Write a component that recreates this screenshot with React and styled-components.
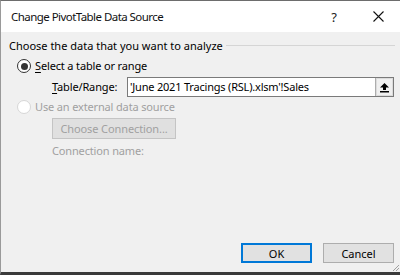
import React from "react";
import styled, { createGlobalStyle } from "styled-components";

const Global = createGlobalStyle`
  html, body { margin: 0; padding: 0; background: #f0f0f0; }
  body { font-family: "Noto Sans", "Open Sans", sans-serif; }
`;

export default function App() {
  return (
    <>
      <Global />
      <Dialog>
        <TitleBar>
          <Title>Change PivotTable Data Source</Title>
          <TitleButton>?</TitleButton>
          <TitleButton>
            <svg width="11" height="11" viewBox="0 0 11 11">
              <path d="M0.5 0.5 L10.5 10.5 M10.5 0.5 L0.5 10.5" stroke="#111" strokeWidth="1.1" />
            </svg>
          </TitleButton>
        </TitleBar>
        <Body>
          <GroupHeader>
            <span>Choose the data that you want to analyze</span>
            <Rule />
          </GroupHeader>
          <OptionRow>
            <Radio checked />
            <Label><u>S</u>elect a table or range</Label>
          </OptionRow>
          <FieldRow>
            <Label><u>T</u>able/Range:</Label>
            <RangeBox>
              <RangeInput>'June 2021 Tracings (RSL).xlsm'!Sales</RangeInput>
              <CollapseButton>
                <svg width="11" height="11" viewBox="0 0 11 11">
                  <path d="M5.5 1 L10 5.5 L7 5.5 L7 8 L4 8 L4 5.5 L1 5.5 Z" fill="#000" />
                  <rect x="1" y="9" width="9" height="1.5" fill="#000" />
                </svg>
              </CollapseButton>
            </RangeBox>
          </FieldRow>
          <OptionRow $tight>
            <Radio />
            <Label disabled>Use an external data source</Label>
          </OptionRow>
          <Indented>
            <FlatButton disabled>Choose Connection...</FlatButton>
            <Label disabled>Connection name:</Label>
          </Indented>
          <Spacer />
          <Footer>
            <DialogButton $default>OK</DialogButton>
            <DialogButton>Cancel</DialogButton>
          </Footer>
        </Body>
        <Grip>
          <svg width="10" height="10" viewBox="0 0 10 10">
            <path d="M9 3 L3 9 M9 6 L6 9" stroke="#a0a0a0" strokeWidth="1" />
          </svg>
        </Grip>
      </Dialog>
    </>
  );
}

const Dialog = styled.div`
  position: relative;
  width: 400px;
  height: 275px;
  box-sizing: border-box;
  border-top: 1px solid #6d6d6d;
  border-left: 1px solid #9a9a9a;
  border-bottom: 3px solid #3a3a3a;
  background: #f0f0f0;
  display: flex;
  flex-direction: column;
  color: #000;
  font-size: 11px;
`;

const TitleBar = styled.div`
  height: 31px;
  background: #fff;
  display: flex;
  align-items: center;
  padding-left: 10px;
`;

const Title = styled.div`
  flex: 1;
  font-size: 11.5px;
  letter-spacing: -0.55px;
  color: #111;
`;

const TitleButton = styled.div`
  width: 44px;
  height: 31px;
  display: flex;
  align-items: center;
  justify-content: center;
  font-size: 13px;
  color: #222;
`;

const Body = styled.div`
  flex: 1;
  display: flex;
  flex-direction: column;
  padding: 6px 5px 9px 8px;
`;

const GroupHeader = styled.div`
  display: flex;
  align-items: center;
  gap: 3px;
  height: 14px;
`;

const Rule = styled.div`
  flex: 1;
  height: 1px;
  background: #d5d5d5;
`;

const OptionRow = styled.div`
  display: flex;
  align-items: center;
  gap: 4px;
  height: 14px;
  padding-left: 8px;
  margin-top: ${(p) => (p.$tight ? "3px" : "7px")};
`;

const Radio = styled.span`
  width: 12px;
  height: 12px;
  border-radius: 50%;
  border: 1px solid ${(p) => (p.checked ? "#333" : "#d6d6d6")};
  background: #fff;
  display: flex;
  align-items: center;
  justify-content: center;
  &::after {
    content: "";
    width: 7px;
    height: 7px;
    border-radius: 50%;
    background: ${(p) => (p.checked ? "#333" : "transparent")};
  }
`;

const Label = styled.span`
  color: ${(p) => (p.disabled ? "#a0a0a0" : "#000")};
  white-space: nowrap;
  line-height: 14px;
  letter-spacing: -0.15px;
  u { text-underline-offset: 2px; }
`;

const FieldRow = styled.div`
  display: flex;
  align-items: center;
  justify-content: space-between;
  padding-left: 43px;
  margin-right: 1px;
  margin-top: 4px;
`;

const RangeBox = styled.div`
  width: 267px;
  height: 20px;
  display: flex;
  box-sizing: border-box;
  border: 1px solid #7a7a7a;
  background: #fff;
`;

const RangeInput = styled.div`
  flex: 1;
  padding-left: 2px;
  line-height: 18px;
  letter-spacing: -0.2px;
  white-space: nowrap;
  overflow: hidden;
`;

const CollapseButton = styled.div`
  width: 18px;
  box-sizing: border-box;
  border-left: 1px solid #adadad;
  background: #f0f0f0;
  box-shadow: inset 0 0 0 1px #dcdcdc;
  display: flex;
  align-items: center;
  justify-content: center;
`;

const Indented = styled.div`
  display: flex;
  flex-direction: column;
  align-items: flex-start;
  gap: 5px;
  padding-left: 43px;
  margin-top: 4px;
`;

const FlatButton = styled.button`
  width: 124px;
  height: 21px;
  font: inherit;
  letter-spacing: -0.1px;
  color: #a0a0a0;
  background: #e0e0e0;
  border: 1px solid #c4c4c4;
  padding: 0;
`;

const Spacer = styled.div`
  flex: 1;
`;

const Footer = styled.div`
  display: flex;
  justify-content: flex-end;
  gap: 11px;
  margin-right: 1px;
`;

const DialogButton = styled.button`
  width: 71px;
  height: 20px;
  box-sizing: border-box;
  font: inherit;
  color: #000;
  background: #e1e1e1;
  border: ${(p) => (p.$default ? "2px solid #0078d7" : "1px solid #adadad")};
  padding: 0;
`;

const Grip = styled.div`
  position: absolute;
  right: 0;
  bottom: 0;
  line-height: 0;
`;
